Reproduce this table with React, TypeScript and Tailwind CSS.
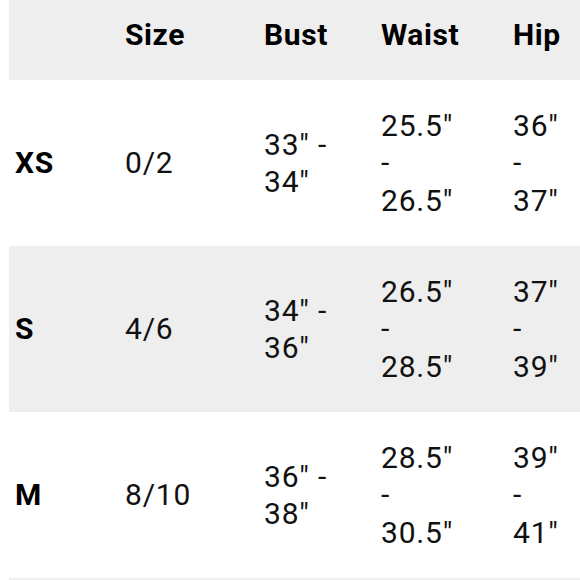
const rows = [
  { label: "XS", size: "0/2", bust: ['33" -', '34"'], waist: ['25.5"', "-", '26.5"'], hip: ['36"', "-", '37"'] },
  { label: "S", size: "4/6", bust: ['34" -', '36"'], waist: ['26.5"', "-", '28.5"'], hip: ['37"', "-", '39"'] },
  { label: "M", size: "8/10", bust: ['36" -', '38"'], waist: ['28.5"', "-", '30.5"'], hip: ['39"', "-", '41"'] },
];

const cols = "grid grid-cols-[110px_139px_117px_132px_1fr]";

function Lines({ lines }: { lines: string[] }) {
  return (
    <div className="pl-[6px]">
      {lines.map((l, i) => (
        <div key={i}>{l}</div>
      ))}
    </div>
  );
}

export default function App() {
  return (
    <div className="w-[580px] h-[580px] overflow-hidden bg-white pl-[9px] font-['Roboto',sans-serif] text-[30px] leading-[37.5px] text-[#111]">
      <div className={`${cols} h-[80px] bg-[#eeeeee] pt-[16px] font-bold tracking-[0.6px] text-black`}>
        <div />
        <div className="pl-[6px]">Size</div>
        <div className="pl-[6px]">Bust</div>
        <div className="pl-[6px]">Waist</div>
        <div className="pl-[6px]">Hip</div>
      </div>
      {rows.map((r, i) => (
        <div
          key={r.label}
          className={`${cols} h-[166px] items-center tracking-[0.8px] ${i % 2 === 1 ? "bg-[#eeeeee]" : "bg-white"}`}
        >
          <div className="pl-[6px] font-bold text-black tracking-[0.6px]">{r.label}</div>
          <div className="pl-[6px]">{r.size}</div>
          <Lines lines={r.bust} />
          <Lines lines={r.waist} />
          <Lines lines={r.hip} />
        </div>
      ))}
      <div className="h-[80px] bg-[#eeeeee]" />
    </div>
  );
}
